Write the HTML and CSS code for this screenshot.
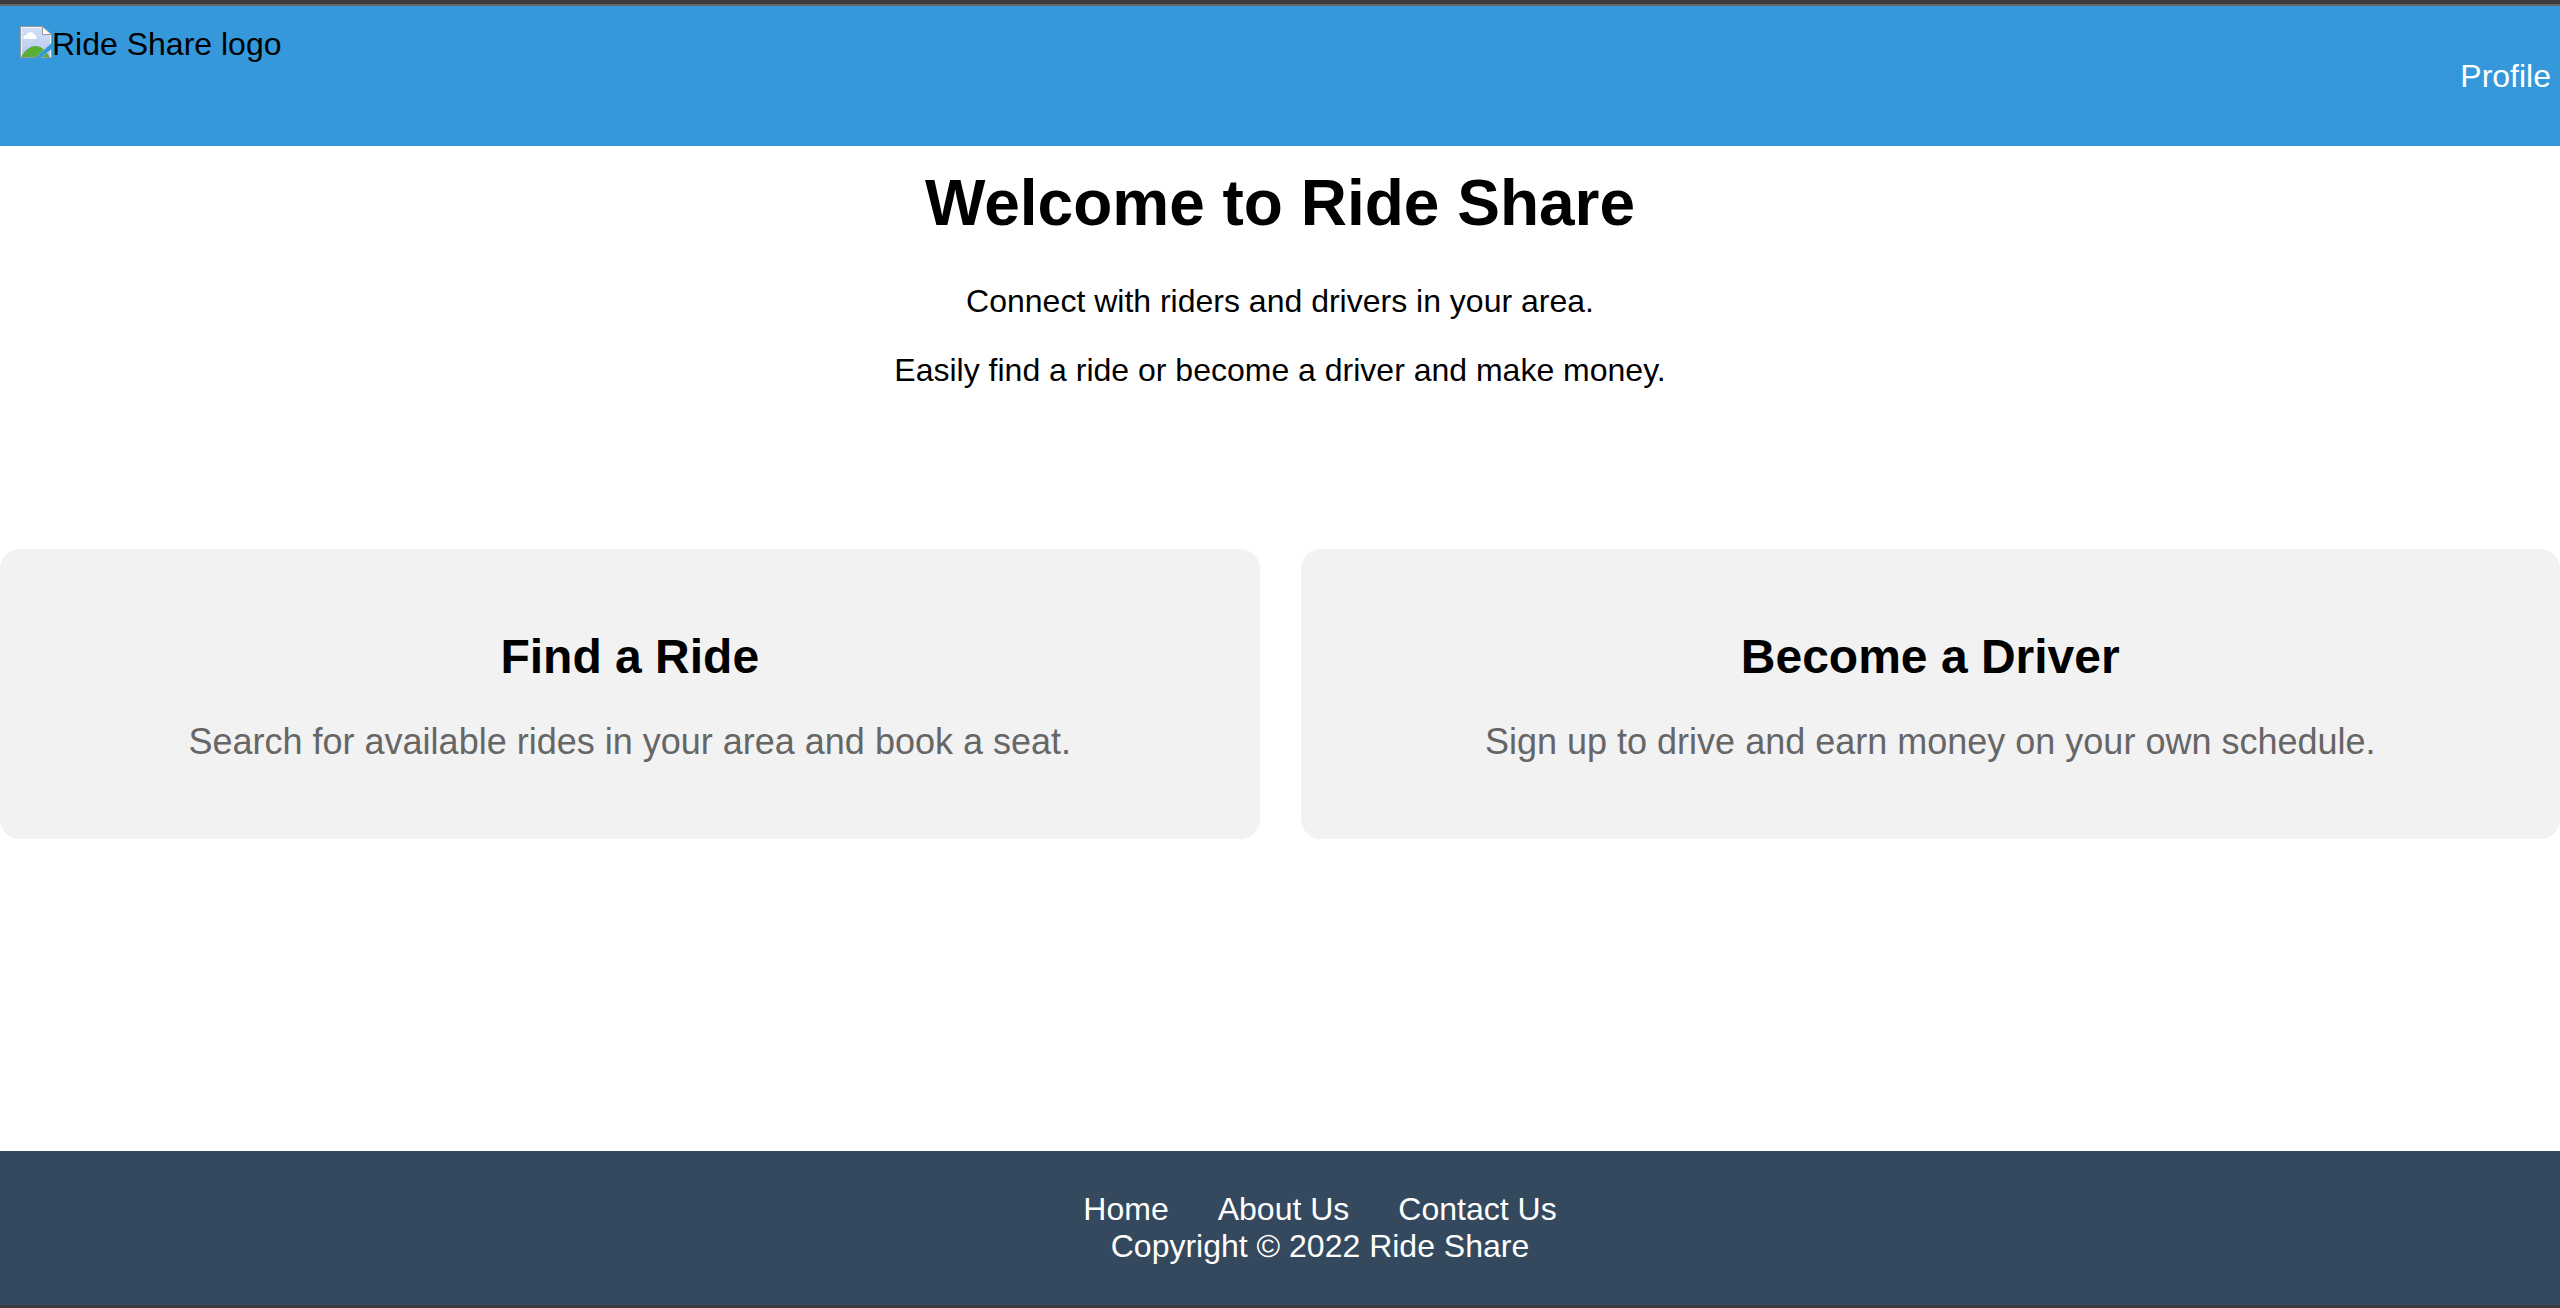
FILE: index.html
```html
<!DOCTYPE html>
<html lang="en">
<head>
<meta charset="utf-8">
<title>Ride Share</title>
<link rel="stylesheet" href="styles.css">
</head>
<body>
<div class="edge-top"></div>
<header class="header">
  <div class="logo">
    <svg class="logo-icon" viewBox="0 0 32 32" aria-hidden="true">
      <defs>
        <linearGradient id="sky" x1="0" y1="0" x2="0" y2="1">
          <stop offset="0" stop-color="#cfe0fb"/>
          <stop offset="1" stop-color="#b9c8ec"/>
        </linearGradient>
        <clipPath id="torn"><path d="M0 0H32V16.500L14.500 32H0zM32 23V32H20.500z"/></clipPath>
      </defs>
      <g clip-path="url(#torn)">
        <path d="M.5.500H22.500L31.500 9V31.500H.5z" fill="#eef3fd"/>
        <path d="M2 2H22V9H30V31H2z" fill="url(#sky)"/>
        <path d="M3.500 13c-1-2 1-4 3-4 1-4 7-4 8 0 2 0 3 3 1.500 4z" fill="#fff"/>
        <path d="M1 31C5 24 10 20 15.500 20S26 24 29.500 31z" fill="#5aae36"/>
        <path d="M22.500.500V8.500H31.500z" fill="#fff"/>
        <path d="M.5.500H22.500L31.500 8.500V31.500H.5zM22.500.500V8.500H31.500" fill="none" stroke="#999"/>
      </g>
    </svg><span>Ride Share logo</span>
  </div>
  <nav><a class="profile" href="#">Profile</a></nav>
</header>
<main class="main">
  <section class="hero">
    <h1 class="title">Welcome to Ride Share</h1>
    <p class="lead">Connect with riders and drivers in your area.</p>
    <p class="lead">Easily find a ride or become a driver and make money.</p>
  </section>
  <section class="cards">
    <article class="card">
      <h2 class="card-title">Find a Ride</h2>
      <p class="card-text">Search for available rides in your area and book a seat.</p>
    </article>
    <article class="card">
      <h2 class="card-title">Become a Driver</h2>
      <p class="card-text">Sign up to drive and earn money on your own schedule.</p>
    </article>
  </section>
</main>
<footer class="footer">
  <nav class="footer-nav">
    <a class="footer-link" href="#">Home</a>
    <a class="footer-link" href="#">About Us</a>
    <a class="footer-link" href="#">Contact Us</a>
  </nav>
  <p class="copyright">Copyright © 2022 Ride Share</p>
</footer>
</body>
</html>
```

FILE: styles.css
```css
* { box-sizing: border-box; }
body {
  margin: 0;
  min-height: 100vh;
  display: flex;
  flex-direction: column;
  font: 32px/37px "Liberation Sans", Arial, sans-serif;
  color: #000;
  background: #fff;
  border-bottom: 3px solid #3c3c3c;
}
.edge-top {
  height: 6px;
  background: #3c3c3c;
  border-bottom: 2px solid #666;
}
.header {
  display: flex;
  justify-content: space-between;
  padding: 20px 9px 20px 20px;
  min-height: 140px;
  background: #3498db;
}
.logo { display: flex; }
.logo-icon { width: 32px; height: 32px; }
.profile { display: block; margin-top: 32px; color: #fff; text-decoration: none; }
.main { flex: 1; }
.hero { text-align: center; padding-top: 20px; }
.title { margin: 0 0 43px; font-size: 64px; line-height: 74px; }
.lead { margin: 0 0 32px; }
.cards { display: flex; gap: 41px; margin-top: 160px; }
.card {
  flex: 1;
  padding: 80px 40px 76px;
  border-radius: 20px;
  background: #f2f2f2;
  text-align: center;
}
.card-title { margin: 0; font-size: 48px; line-height: 56px; }
.card-text { margin: 36px 0 0; font-size: 36px; line-height: 42px; color: #666; }
.footer {
  padding: 40px 0 40px 80px;
  background: #34495e;
  color: #fff;
  text-align: center;
}
.footer-nav { display: flex; justify-content: center; gap: 49px; }
.footer-link { color: #fff; text-decoration: none; }
.copyright { margin: 0; }
```
